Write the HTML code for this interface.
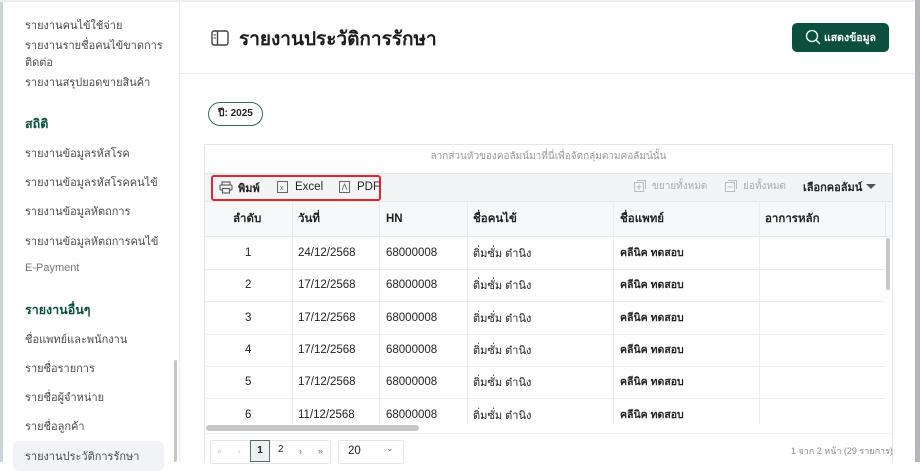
<!DOCTYPE html>
<html><head><meta charset="utf-8"><style>
*{box-sizing:border-box;margin:0;padding:0}
body{width:920px;height:462px;overflow:hidden;background:#fff;font-family:"Liberation Sans","Noto Sans CJK SC",sans-serif;position:relative;color:#222}
.a{position:absolute;white-space:nowrap}
.side{font-size:11px;color:#4a4a4a}
.sh{font-size:12.5px;font-weight:bold;color:#0b4f3f}
.cell{position:absolute;font-size:11.5px;color:#222;white-space:nowrap}
.b{font-weight:bold}
</style></head><body>
<div class="a" style="left:0;top:0;width:3px;height:462px;background:#d0d3d6"></div>
<div class="a" style="left:0;top:0;width:920px;height:2px;background:#eceef0"></div>
<div class="a" style="left:179px;top:0;width:1px;height:462px;background:#e8eaec"></div>
<div class="a" style="left:915px;top:0;width:5px;height:462px;background:#b4b8bc"></div>
<!-- sidebar -->
<div class="a side" style="left:25px;top:16px">รายงานคนไข้ใช้จ่าย</div>
<div class="a side" style="left:25px;top:36px">รายงานรายชื่อคนไข้ขาดการ</div>
<div class="a side" style="left:25px;top:53px">ติดต่อ</div>
<div class="a side" style="left:25px;top:73px">รายงานสรุปยอดขายสินค้า</div>
<div class="a sh" style="left:25px;top:114px">สถิติ</div>
<div class="a side" style="left:25px;top:144px">รายงานข้อมูลรหัสโรค</div>
<div class="a side" style="left:25px;top:173px">รายงานข้อมูลรหัสโรคคนไข้</div>
<div class="a side" style="left:25px;top:202px">รายงานข้อมูลหัตถการ</div>
<div class="a side" style="left:25px;top:232px">รายงานข้อมูลหัตถการคนไข้</div>
<div class="a side" style="left:25px;top:262px;color:#777">E-Payment</div>
<div class="a sh" style="left:25px;top:300px">รายงานอื่นๆ</div>
<div class="a side" style="left:25px;top:330px">ชื่อแพทย์และพนักงาน</div>
<div class="a side" style="left:25px;top:359px">รายชื่อรายการ</div>
<div class="a side" style="left:25px;top:388px">รายชื่อผู้จำหน่าย</div>
<div class="a side" style="left:25px;top:417px">รายชื่อลูกค้า</div>
<div class="a" style="left:13px;top:441px;width:151px;height:30px;background:#f1f3f6;border-radius:6px"></div>
<div class="a side" style="left:25px;top:447px">รายงานประวัติการรักษา</div>
<div class="a" style="left:174px;top:360px;width:3px;height:102px;background:#c4c6c8;border-radius:2px"></div>
<!-- header -->
<svg class="a" style="left:211px;top:30px" width="18" height="16" viewBox="0 0 18 16"><rect x="1" y="1" width="16" height="14" rx="2" fill="none" stroke="#444" stroke-width="1.4"/><line x1="6.5" y1="1" x2="6.5" y2="15" stroke="#444" stroke-width="1.4"/><line x1="2.5" y1="5" x2="5" y2="5" stroke="#444"/><line x1="2.5" y1="8" x2="5" y2="8" stroke="#444"/></svg>
<div class="a" style="left:239px;top:24px;font-size:19px;font-weight:bold;color:#1c1c1c">รายงานประวัติการรักษา</div>
<div class="a" style="left:792px;top:23px;width:97px;height:29px;background:#0b4f3f;border-radius:5px"></div>
<svg class="a" style="left:805px;top:29px" width="16" height="16" viewBox="0 0 16 16"><circle cx="7" cy="7" r="5.5" fill="none" stroke="#fff" stroke-width="1.3"/><line x1="11" y1="11" x2="15" y2="15" stroke="#fff" stroke-width="1.3"/></svg>
<div class="a" style="left:824px;top:29px;font-size:10.5px;font-weight:bold;color:#fff">แสดงข้อมูล</div>
<div class="a" style="left:180px;top:73px;width:735px;height:1px;background:#e8eaec"></div>
<div class="a" style="left:208px;top:102px;width:55px;height:24px;border:1.3px solid #2f6e5e;border-radius:12px;font-size:10px;font-weight:bold;text-align:center;line-height:21px;color:#222">ปี: 2025</div>
<!-- table panel -->
<div class="a" style="left:204px;top:144px;width:689px;height:318px;border:1px solid #e4e6e8;border-bottom:none"></div>
<div class="a" style="left:204px;top:149px;width:689px;text-align:center;font-size:10px;color:#999">ลากส่วนหัวของคอลัมน์มาที่นี่เพื่อจัดกลุ่มตามคอลัมน์นั้น</div>
<div class="a" style="left:205px;top:173px;width:687px;height:28px;background:#f3f4f6;border-top:1px solid #e6e7e9"></div>
<div class="a" style="left:211px;top:175px;width:170px;height:26px;border:2px solid #e0262e;border-radius:3px"></div>
<svg class="a" style="left:219px;top:181px" width="14" height="13" viewBox="0 0 14 13"><rect x="3" y="1" width="8" height="3" fill="none" stroke="#555" stroke-width="1.1"/><rect x="1" y="4" width="12" height="5" rx="1" fill="none" stroke="#555" stroke-width="1.1"/><rect x="3.5" y="7.5" width="7" height="4.5" fill="#f3f4f6" stroke="#555" stroke-width="1.1"/></svg>
<div class="a b" style="left:238px;top:179px;font-size:11px">พิมพ์</div>
<svg class="a" style="left:277px;top:181px" width="11" height="12"><rect x=".5" y=".5" width="10" height="11" fill="none" stroke="#666"/><text x="3" y="9" font-size="7" fill="#666" font-family="Liberation Sans">x</text></svg>
<div class="a" style="left:295px;top:181px;font-size:11.5px">Excel</div>
<svg class="a" style="left:339px;top:181px" width="11" height="12"><rect x=".5" y=".5" width="10" height="11" fill="none" stroke="#666"/><path d="M3 9 L5.5 3 L8 9" fill="none" stroke="#666" stroke-width=".8"/></svg>
<div class="a" style="left:357px;top:181px;font-size:11.5px">PDF</div>
<svg class="a" style="left:634px;top:180px" width="12" height="12"><rect x=".5" y="2.5" width="9" height="9" fill="none" stroke="#bbb"/><path d="M3 0.5H11.5V9" fill="none" stroke="#bbb"/><path d="M5 4.5v5M2.5 7h5" stroke="#bbb"/></svg>
<div class="a" style="left:652px;top:179px;font-size:10px;color:#aaa">ขยายทั้งหมด</div>
<svg class="a" style="left:725px;top:180px" width="12" height="12"><rect x=".5" y="2.5" width="9" height="9" fill="none" stroke="#bbb"/><path d="M3 0.5H11.5V9" fill="none" stroke="#bbb"/><path d="M2.5 7h5" stroke="#bbb"/></svg>
<div class="a" style="left:743px;top:179px;font-size:10px;color:#aaa">ย่อทั้งหมด</div>
<div class="a b" style="left:803px;top:178px;font-size:11px">เลือกคอลัมน์</div>
<svg class="a" style="left:866px;top:184px" width="10" height="6"><path d="M0 0H10L5 5Z" fill="#555"/></svg>
<!-- header row -->
<div class="a" style="left:205px;top:201px;width:687px;height:36px;background:#f7f8fa;border-top:1px solid #e6e7e9;border-bottom:1px solid #e6e7e9"></div>
<div class="a" style="left:885px;top:202px;width:1px;height:35px;background:#e6e7e9"></div>
<div class="cell b" style="left:233px;top:210px">ลำดับ</div>
<div class="cell b" style="left:298px;top:210px">วันที่</div>
<div class="cell b" style="left:386px;top:213px">HN</div>
<div class="cell b" style="left:473px;top:210px">ชื่อคนไข้</div>
<div class="cell b" style="left:620px;top:210px">ชื่อแพทย์</div>
<div class="cell b" style="left:765px;top:210px">อาการหลัก</div>
<!-- column lines -->
<div class="a" style="left:292px;top:202px;width:1px;height:222px;background:#ececee"></div>
<div class="a" style="left:379px;top:202px;width:1px;height:222px;background:#ececee"></div>
<div class="a" style="left:467px;top:202px;width:1px;height:222px;background:#ececee"></div>
<div class="a" style="left:613px;top:202px;width:1px;height:222px;background:#ececee"></div>
<div class="a" style="left:759px;top:202px;width:1px;height:222px;background:#ececee"></div>
<div class="a" style="left:886px;top:238px;width:4px;height:52px;background:#c4c6c8;border-radius:2px"></div>
<div id="rows"></div>
<script>
var d=["24/12/2568","17/12/2568","17/12/2568","17/12/2568","17/12/2568","11/12/2568"],h="";
for(var i=0;i<6;i++){var t=246+i*32.3;
h+='<div class="cell" style="left:245px;top:'+(t+1)+'px">'+(i+1)+'</div><div class="cell" style="left:298px;top:'+(t+1)+'px">'+d[i]+'</div><div class="cell" style="left:386px;top:'+(t+1)+'px">68000008</div><div class="cell" style="left:473px;top:'+(t-2)+'px;font-size:11px">ติ่มซั่ม ต๋านิง</div><div class="cell b" style="left:620px;top:'+(t-2)+'px;font-size:10.5px">คลีนิค ทดสอบ</div>';
if(i<5)h+='<div class="a" style="left:205px;top:'+(269+i*32.3)+'px;width:680px;height:1px;background:#ececee"></div>';}
document.getElementById('rows').innerHTML=h;
</script>
<div class="a" style="left:205px;top:424px;width:687px;height:9px;background:#fff"></div>
<div class="a" style="left:206px;top:425px;width:213px;height:6px;background:#c4c6c8;border-radius:3px"></div>
<div class="a" style="left:205px;top:433px;width:687px;height:1px;background:#ececee"></div>
<!-- pager -->
<div class="a" style="left:210px;top:440px;width:121px;height:24px;border:1px solid #e4e6e8;border-radius:3px"></div>
<div class="a" style="left:217px;top:446px;font-size:9px;color:#ccc">«</div>
<div class="a" style="left:238px;top:446px;font-size:9px;color:#ccc">‹</div>
<div class="a" style="left:250px;top:440px;width:20px;height:22px;border:1.3px solid #5a6c66;background:#eef0f2;font-size:10px;font-weight:bold;text-align:center;line-height:20px">1</div>
<div class="a" style="left:278px;top:444px;font-size:10px">2</div>
<div class="a" style="left:299px;top:446px;font-size:9px;color:#666">›</div>
<div class="a" style="left:318px;top:446px;font-size:9px;color:#666">»</div>
<div class="a" style="left:338px;top:440px;width:66px;height:24px;border:1px solid #e4e6e8;border-radius:3px"></div>
<div class="a" style="left:348px;top:445px;font-size:11.5px">20</div>
<div class="a" style="left:386px;top:443px;font-size:9px;color:#666">⌄</div>
<div class="a" style="left:791px;top:444px;font-size:9px;color:#888">1 จาก 2 หน้า (29 รายการ)</div>
</body></html>
